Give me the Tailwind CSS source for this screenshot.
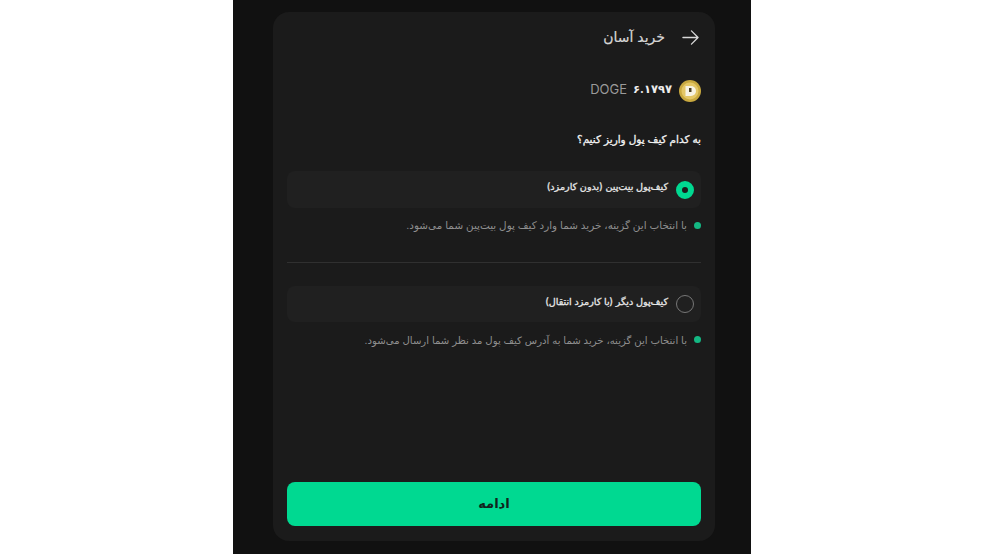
<!DOCTYPE html>
<html lang="fa" dir="rtl">
<head>
  <meta charset="UTF-8" />
  <title>خرید آسان</title>
  <script src="https://cdn.jsdelivr.net/npm/@tailwindcss/browser@4"></script>
</head>
<body class="bg-white font-['Inter','DejaVu_Sans',sans-serif]">
  <div class="mx-auto w-[518px] h-[554px] bg-[#111111] pt-3 px-[36px] pb-[13px]">
    <div class="h-full w-[442px] ml-auto mr-0 bg-[#1b1b1b] rounded-2xl px-3.5 flex flex-col">

      <!-- Header -->
      <header class="flex items-center gap-[17px] h-[52px] -mt-[1px] pr-[2px]">
        <svg class="w-[17px] h-[17px] text-[#d8d8d8]" viewBox="0 0 18 18" fill="none" stroke="currentColor" stroke-width="1.4" stroke-linecap="round" stroke-linejoin="round">
          <path d="M1 9h16M10 2l7 7-7 7" />
        </svg>
        <h1 class="text-[14px] text-[#d6d6d6] -mt-0.5 [-webkit-text-stroke:0.2px_#d6d6d6]">خرید آسان</h1>
      </header>

      <!-- Amount -->
      <div class="flex items-center gap-[7px] mt-[15px] h-[26px]">
        <svg class="w-[22px] h-[22px] shrink-0" viewBox="0 0 22 22">
          <circle cx="11" cy="11" r="11" fill="#c9a93f" />
          <circle cx="11" cy="11" r="8.5" fill="#e4c766" />
          <path d="M6.5 6h5.5a5 5 0 0 1 0 10H6.500z" fill="#f7f3e3" />
          <path d="M10 8h2.500v4H10z" fill="#4a3f22" />
        </svg>
        <div class="flex items-center gap-[6px] -mt-[3px]" dir="ltr">
          <span class="text-[13px] text-[#9a9a9a]">DOGE</span>
          <span class="text-[11.5px] font-bold text-[#ededed]">۶.۱۷۹۷</span>
        </div>
      </div>

      <p class="mt-[28px] text-[10.5px] text-[#f2f2f2] leading-4 [-webkit-text-stroke:0.3px_#f2f2f2]">به کدام کیف پول واریز کنیم؟</p>

      <!-- Option 1 -->
      <div class="mt-[23px] h-[37px] rounded-lg bg-[#202020] flex items-center gap-2 pr-[7px]">
        <span class="w-[18px] h-[18px] rounded-full border-[6px] border-[#00d991] bg-[#1b1b1b]"></span>
        <span class="text-[9.6px] text-[#e8e8e8] -mt-1 [-webkit-text-stroke:0.3px_#e8e8e8]">کیف‌پول بیت‌پین (بدون کارمزد)</span>
      </div>
      <div class="flex items-start gap-[7px] mt-[12px] h-[12px]">
        <span class="w-[7px] h-[7px] mt-[2px] rounded-full bg-[#14b883] shrink-0"></span>
        <p class="text-[10.4px] text-[#8f8f8f] leading-3">با انتخاب این گزینه، خرید شما وارد کیف پول بیت‌پین شما می‌شود.</p>
      </div>

      <hr class="mt-[30px] border-0 h-px bg-[#303030]" />

      <!-- Option 2 -->
      <div class="mt-[23px] h-[36px] rounded-lg bg-[#202020] flex items-center gap-2 pr-[7px]">
        <span class="w-[18px] h-[18px] rounded-full border border-[#777777] -mt-[1px]"></span>
        <span class="text-[9.6px] text-[#e8e8e8] -mt-1 [-webkit-text-stroke:0.3px_#e8e8e8]">کیف‌پول دیگر (با کارمزد انتقال)</span>
      </div>
      <div class="flex items-start gap-[7px] mt-[12px] h-[12px]">
        <span class="w-[7px] h-[7px] mt-[2px] rounded-full bg-[#14b883] shrink-0"></span>
        <p class="text-[10.15px] text-[#8f8f8f] leading-3">با انتخاب این گزینه، خرید شما به آدرس کیف پول مد نظر شما ارسال می‌شود.</p>
      </div>

      <button class="mt-auto mb-[15px] h-[44px] rounded-lg bg-[#00d991] text-[13px] font-bold text-[#10251d]">ادامه</button>
    </div>
  </div>
</body>
</html>
